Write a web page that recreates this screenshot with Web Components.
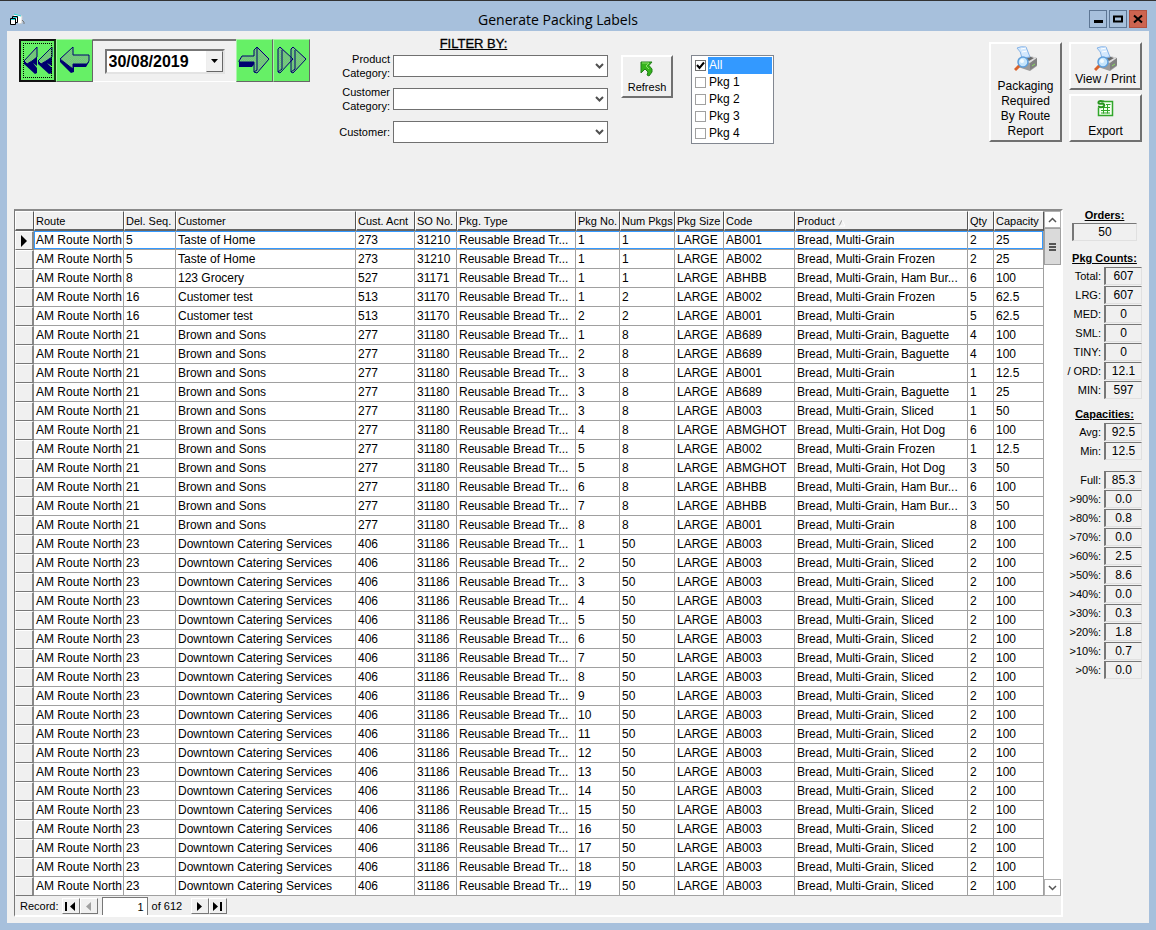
<!DOCTYPE html>
<html lang="en">
<head>
<meta charset="utf-8">
<title>Generate Packing Labels</title>
<style>
  html, body {
    margin: 0;
    height: 100%;
  }
  body {
    font-family: "Liberation Sans", Arial, sans-serif;
    font-size: 12px;
    color: #000;
    background: #a7c0dc;
  }
</style>
</head>
<body>
<app-window caption="Generate Packing Labels">
  <date-nav slot="tools" value="30/08/2019"></date-nav>
  <filter-panel slot="tools"></filter-panel>
  <tool-button slot="tools" icon="refresh" class="refresh">Refresh</tool-button>
  <pkg-list slot="tools"></pkg-list>
  <report-buttons slot="tools"></report-buttons>
  <label-grid></label-grid>
  <label-stats></label-stats>
</app-window>

<script>
const ICONS = {
  refresh: `<svg width="14" height="16" viewBox="0 0 14 16">
    <path d="M1 1L12 1L9 4.500L12 8V11L9 15L7 14L8 11L5 8L1 12Z" fill="#35b31c" stroke="#23801a"/>
    <path d="M2 2H9L6 5L9 8" fill="none" stroke="#8ce268"/></svg>`,
  printer: `<svg width="24" height="26" viewBox="0 0 24 26">
    <path d="M4 13L12 9L23 12V20L16 25L4 21Z" fill="#9a9a9a"/>
    <path d="M4 13L11 8L23 12L16 17Z" fill="#dcdcdc"/>
    <path d="M16 17L23 12V19L16 24Z" fill="#808080"/>
    <path d="M10 12L14 10L20 12L15 15Z" fill="#6a6a6a"/>
    <path d="M3 2Q7 0 12 1L16 11L8 12Q7 5 3 2Z" fill="#d3e8fd" stroke="#86b4e8"/>
    <path d="M7 3L12 2M8 6L13 5" stroke="#fff"/>
    <path d="M18 20L21 18" stroke="#8be05d"/>
    <path d="M6 19L1 24" stroke="#d9622b" stroke-width="3"/>
    <circle cx="9" cy="16" r="5" fill="#c5e5fc" stroke="#5e9fdc" stroke-width="1.5"/>
    <circle cx="8" cy="15" r="2" fill="#f5fcff"/></svg>`,
  export: `<svg width="17" height="17" viewBox="0 0 17 17">
    <path d="M7 1.500H15.500V15.500H1.500V8" fill="#f4fff0" stroke="#31a62a" stroke-width="1.5"/>
    <path d="M4 7.500H13M4 10.500H13M4 13H13M6.500 7V13.500M10.500 5V13.500M9 4.500H13.500" stroke="#31a62a"/>
    <path d="M7 1.500Q1 0 1.500 3Q2 4 5 3.500Q8 4 7 6Q5 8 1 6.500" fill="none" stroke="#27961f" stroke-width="2"/></svg>`
};

const CHEVRON = `<svg class="chevron" width="9" height="6" viewBox="0 0 9 6">
  <path d="M1 1L4.500 4.500L8 1" fill="none" stroke="#505050" stroke-width="2"/></svg>`;

class AppWindow extends HTMLElement {
  constructor() {
    super();
    this.attachShadow({ mode: 'open' });
  }
  connectedCallback() {
    this.shadowRoot.innerHTML = `
      <style>
        :host {
          display: flex;
          flex-direction: column;
          box-sizing: border-box;
          min-height: 100vh;
          padding: 0 7px 7px;
          border-top: 1px solid #333;
          background: #a7c0dc;
        }
        header {
          display: grid;
          grid-template-columns: 24px 1fr 64px;
          align-items: center;
          height: 30px;
        }
        header > svg {
          margin-left: 2px;
          margin-top: 6px;
        }
        h1 {
          margin: 8px 0 0;
          font: 14px/20px "Open Sans", sans-serif;
          text-align: center;
        }
        .controls {
          display: flex;
          justify-content: flex-end;
          gap: 2px;
          margin: 6px 2px 0 0;
        }
        .controls button {
          display: grid;
          place-items: center;
          width: 18px;
          height: 18px;
          padding: 0;
          border: 1px solid #5d7694;
          background: #a7c0dc;
        }
        .controls .close {
          border-color: #b3503f;
          background: #cd6450;
        }
        main {
          flex: 1;
          display: flex;
          flex-direction: column;
          padding: 5px 7px 6px 7px;
          background: #f0f0f0;
        }
        .tools {
          display: flex;
          align-items: flex-start;
          min-height: 173px;
          padding-left: 5px;
        }
        .content {
          flex: 1;
          display: flex;
          align-items: flex-start;
          gap: 4px;
        }
        ::slotted(date-nav) { margin-top: 3px; }
        ::slotted(filter-panel) { margin-left: 29px; }
        ::slotted(.refresh) { margin: 19px 18px 0 13px; width: 52px; height: 43px; font-size: 11px; }
        ::slotted(pkg-list) { margin-top: 19px; }
        ::slotted(report-buttons) { margin: 6px 0 0 auto; }
        ::slotted(label-grid) { flex: 1; min-width: 0; }
      </style>
      <header>
        <svg width="16" height="13" viewBox="0 0 16 13">
          <path d="M4 3L6 1L13 3V10L10 11" fill="#fff" stroke="#ccc"/>
          <path d="M5 1L12 3" stroke="#24dce0"/>
          <path d="M13 7L15 9V11" stroke="#777" fill="none"/>
          <path d="M3.500 3.500H8.500V9.500H3.500Z" fill="#fff" stroke="#000"/>
          <path d="M1.500 5.500H6.500V11.500H1.500Z" fill="#fff" stroke="#000"/>
          <path d="M2 6.500H6M4 4.500H8" stroke="#24dce0"/>
        </svg>
        <h1>${this.getAttribute('caption')}</h1>
        <div class="controls">
          <button aria-label="Minimize"><svg width="10" height="10"><path d="M1 6H10V9H1Z"/></svg></button>
          <button aria-label="Maximize"><svg width="10" height="10"><path d="M1 2.500H9V7.500H1Z" fill="none" stroke="#000" stroke-width="2"/></svg></button>
          <button class="close" aria-label="Close"><svg width="10" height="10"><path d="M1 1.500L9 8.500M9 1.500L1 8.500" stroke="#000" stroke-width="2"/></svg></button>
        </div>
      </header>
      <main>
        <div class="tools"><slot name="tools"></slot></div>
        <div class="content"><slot></slot></div>
      </main>
    `;
  }
}

class DateNav extends HTMLElement {
  constructor() {
    super();
    this.attachShadow({ mode: 'open' });
  }
  arrow(light, dark) {
    return `<svg width="34" height="36" viewBox="0 0 34 36">
      <defs><pattern id="hatch" width="2" height="2" patternUnits="userSpaceOnUse">
        <rect width="2" height="2" fill="#66f066"/><rect width="1" height="1" fill="#7f9f8f"/><rect x="1" y="1" width="1" height="1" fill="#7f9f8f"/>
      </pattern></defs>
      <path d="${dark}" fill="#000070"/>
      <path d="${light}" fill="url(#hatch)" stroke="#000070"/></svg>`;
  }
  connectedCallback() {
    this.shadowRoot.innerHTML = `
      <style>
        :host {
          display: flex;
          height: 43px;
        }
        .nav {
          display: grid;
          place-items: center;
          box-sizing: border-box;
          width: 37px;
          height: 43px;
          padding: 0;
          border: 1px solid;
          border-color: #a8f5a8 #666 #666 #a8f5a8;
          background: #66f066;
        }
        .first {
          border: 2px solid #111;
          border-right-color: #173b17;
          outline: 1px dotted #000;
          outline-offset: -5px;
        }
        .picker {
          display: grid;
          place-items: center;
          box-sizing: border-box;
          width: 143px;
          border-top: 2px solid #777;
          border-bottom: 1px solid #fff;
        }
        .combo {
          display: flex;
          box-sizing: border-box;
          width: 120px;
          height: 25px;
          border: 2px solid;
          border-color: #777 #e3e3e3 #e3e3e3 #777;
          background: #fff;
        }
        input {
          flex: 1;
          min-width: 0;
          padding: 2px 0 0 2px;
          border: 0;
          background: none;
          font: bold 16px "Liberation Sans", sans-serif;
        }
        .drop {
          display: grid;
          place-items: center;
          width: 17px;
          padding: 0;
          border: 1px solid;
          border-color: #eee #666 #666 #eee;
          background: #f0f0f0;
        }
      </style>
      <button class="nav first" aria-label="First date">${this.arrow('M3 18L16 4V14L11 18L6 21ZM17 18L31 4V14L25 18L20 21Z', 'M3 18L6 21L16 14V23L12 20L16 25V30L14 31L3 21ZM17 18L20 21L31 14V23L26 20L31 25V30L28 31L17 21Z')}</button>
      <button class="nav" aria-label="Previous date">${this.arrow('M2 16L15 4V12H31V18L29 21H15V26Z', 'M2 16L2 19L13 30L16 29V24H28L31 19H15V25Z')}</button>
      <div class="picker">
        <div class="combo">
          <input type="text" aria-label="Date" value="${this.getAttribute('value')}">
          <button class="drop" aria-label="Open calendar"><svg width="7" height="4"><path d="M0 0H7L3.500 4Z"/></svg></button>
        </div>
      </div>
      <button class="nav" aria-label="Next date">${this.arrow('M1 18L4 13H16V7L19 4L31 16L19 30L16 29V19H1Z M19 4V27L16 29', 'M1 18H17V20L14 24H1Z')}</button>
      <button class="nav" aria-label="Last date">${this.arrow('M3 6L5 4L18 16L5 30L3 29Z M16 6L18 4L31 16L18 30L16 29Z M7 7V26L3 29M20 7V26L16 29', 'M3 28L7 24V27L5 30Z')}</button>
    `;
  }
}

class FilterPanel extends HTMLElement {
  constructor() {
    super();
    this.attachShadow({ mode: 'open' });
  }
  connectedCallback() {
    const fields = ['Product<br>Category:', 'Customer<br>Category:', 'Customer:'];
    this.shadowRoot.innerHTML = `
      <style>
        :host {
          display: flex;
          flex-direction: column;
          gap: 5px;
          width: 269px;
        }
        h2 {
          margin: 0 0 -5px;
          font-size: 13px;
          line-height: 16px;
          font-weight: normal;
          text-align: center;
          text-decoration: underline;
          -webkit-text-stroke: 0.3px #000;
        }
        .field {
          display: grid;
          grid-template-columns: 1fr 215px;
          align-items: center;
          gap: 3px;
          height: 28px;
        }
        label {
          font-size: 11px;
          line-height: 14px;
          text-align: right;
        }
        .select {
          display: grid;
          align-items: center;
        }
        select, .chevron {
          grid-area: 1 / 1;
        }
        select {
          appearance: none;
          box-sizing: border-box;
          width: 100%;
          height: 22px;
          border: 1px solid #707070;
          border-radius: 0;
          background: #fff;
        }
        .chevron {
          justify-self: end;
          margin-right: 4px;
          pointer-events: none;
        }
      </style>
      <h2>FILTER BY:</h2>
      ${fields.map((text, i) => `
        <div class="field">
          <label for="f${i}">${text}</label>
          <div class="select"><select id="f${i}"></select>${CHEVRON}</div>
        </div>`).join('')}
    `;
  }
}

class ToolButton extends HTMLElement {
  constructor() {
    super();
    this.attachShadow({ mode: 'open' });
  }
  connectedCallback() {
    this.shadowRoot.innerHTML = `
      <style>
        :host {
          display: block;
        }
        button {
          display: flex;
          flex-direction: column;
          align-items: center;
          justify-content: space-between;
          box-sizing: border-box;
          width: 100%;
          height: 100%;
          padding: 4px 2px 1px;
          border: 2px solid;
          border-color: #fff #707070 #707070 #fff;
          background: #f0f0f0;
          font: inherit;
          line-height: 15px;
          text-align: center;
        }
        :host([icon="printer"]) button {
          padding: 2px 2px 1px;
        }
      </style>
      <button>${ICONS[this.getAttribute('icon')]}<span><slot></slot></span></button>
    `;
  }
}

class PkgList extends HTMLElement {
  constructor() {
    super();
    this.attachShadow({ mode: 'open' });
  }
  connectedCallback() {
    const items = ['All', 'Pkg 1', 'Pkg 2', 'Pkg 3', 'Pkg 4'];
    this.shadowRoot.innerHTML = `
      <style>
        :host {
          display: block;
          box-sizing: border-box;
          width: 83px;
          padding: 1px;
          border: 1px solid #828790;
          background: #fff;
        }
        .item {
          display: flex;
          align-items: center;
          height: 17px;
          padding-left: 2px;
          gap: 2px;
        }
        .check {
          display: grid;
          place-items: center;
        }
        input, svg {
          grid-area: 1 / 1;
        }
        input {
          appearance: none;
          box-sizing: border-box;
          width: 11px;
          height: 11px;
          margin: 0;
          border: 1px solid #a0a0a0;
          background: #fff;
        }
        input:checked {
          border-color: #707070;
        }
        svg {
          pointer-events: none;
          visibility: hidden;
        }
        input:checked + svg {
          visibility: visible;
        }
        label {
          flex: 1;
          padding-left: 1px;
          line-height: 17px;
        }
        .selected label {
          background: #3399ff;
          color: #fff;
        }
      </style>
      ${items.map((text, i) => `
        <div class="item ${i ? '' : 'selected'}">
          <span class="check">
            <input type="checkbox" id="p${i}" ${i ? '' : 'checked'}>
            <svg width="9" height="9"><path d="M1 4L3.500 7L8 1.500" fill="none" stroke="#000" stroke-width="2"/></svg>
          </span>
          <label for="p${i}">${text}</label>
        </div>`).join('')}
    `;
  }
}

class ReportButtons extends HTMLElement {
  constructor() {
    super();
    this.attachShadow({ mode: 'open' });
  }
  connectedCallback() {
    this.shadowRoot.innerHTML = `
      <style>
        :host {
          display: grid;
          grid-template-columns: 73px 73px;
          grid-template-rows: 48px 48px;
          gap: 4px 7px;
        }
        .tall {
          grid-row: span 2;
        }
      </style>
      <tool-button class="tall" icon="printer">Packaging Required By&nbsp;Route Report</tool-button>
      <tool-button icon="printer">View / Print</tool-button>
      <tool-button icon="export">Export</tool-button>
    `;
  }
}

const COLUMNS = [
  ['Route', 90], ['Del. Seq.', 52], ['Customer', 180], ['Cust. Acnt', 59], ['SO No.', 42],
  ['Pkg. Type', 119], ['Pkg No.', 44], ['Num Pkgs', 55], ['Pkg Size', 49], ['Code', 71],
  ['Product', 0], ['Qty', 26], ['Capacity', 50]
];

const GRAIN = 'Bread, Multi-Grain';

// seq, customer, account, order, pkg no, num pkgs, code, product, qty, capacity
const ORDERS = [
  [5, 'Taste of Home', 273, 31210, 1, 1, 'AB001', GRAIN, 2, 25],
  [5, 'Taste of Home', 273, 31210, 1, 1, 'AB002', GRAIN + ' Frozen', 2, 25],
  [8, '123 Grocery', 527, 31171, 1, 1, 'ABHBB', GRAIN + ', Ham Bur...', 6, 100],
  [16, 'Customer test', 513, 31170, 1, 2, 'AB002', GRAIN + ' Frozen', 5, 62.5],
  [16, 'Customer test', 513, 31170, 2, 2, 'AB001', GRAIN, 5, 62.5],
  ...[
    [1, 'AB689', ', Baguette', 4, 100],
    [2, 'AB689', ', Baguette', 4, 100],
    [3, 'AB001', '', 1, 12.5],
    [3, 'AB689', ', Baguette', 1, 25],
    [3, 'AB003', ', Sliced', 1, 50],
    [4, 'ABMGHOT', ', Hot Dog', 6, 100],
    [5, 'AB002', ' Frozen', 1, 12.5],
    [5, 'ABMGHOT', ', Hot Dog', 3, 50],
    [6, 'ABHBB', ', Ham Bur...', 6, 100],
    [7, 'ABHBB', ', Ham Bur...', 3, 50],
    [8, 'AB001', '', 8, 100]
  ].map(([no, code, kind, qty, cap]) => [21, 'Brown and Sons', 277, 31180, no, 8, code, GRAIN + kind, qty, cap]),
  ...Array.from({ length: 19 }, (_, i) =>
    [23, 'Downtown Catering Services', 406, 31186, i + 1, 50, 'AB003', GRAIN + ', Sliced', 2, 100])
];

class LabelGrid extends HTMLElement {
  constructor() {
    super();
    this.attachShadow({ mode: 'open' });
  }
  row([seq, customer, account, order, no, total, code, product, qty, cap], i) {
    const cells = ['AM Route North', seq, customer, account, order, 'Reusable Bread Tr...', no, total, 'LARGE', code, product, qty, cap];
    return `<tr class="${i ? '' : 'current'}">
      <th scope="row">${i ? '' : '<svg width="6" height="12"><path d="M0 0L6 6L0 12Z"/></svg>'}</th>
      ${cells.map(c => `<td>${c}</td>`).join('')}</tr>`;
  }
  connectedCallback() {
    const sort = '<svg width="8" height="8"><path d="M1 7L4 1" stroke="#999"/><path d="M4 1L7 7H1" fill="none" stroke="#fff"/></svg>';
    this.shadowRoot.innerHTML = `
      <style>
        :host {
          display: block;
          border: 2px solid;
          border-color: #8a8a8a #fff #fff #777;
          border-left-width: 1px;
        }
        .view {
          display: flex;
        }
        table {
          flex: 1;
          min-width: 0;
          width: 0;
          table-layout: fixed;
          border-collapse: separate;
          border-spacing: 0;
          background: #fff;
        }
        th, td {
          box-sizing: border-box;
          height: 19px;
          padding: 0 0 0 2px;
          border-right: 1px solid #a0a0a0;
          border-bottom: 1px solid #a0a0a0;
          line-height: 18px;
          text-align: left;
          white-space: nowrap;
          overflow: hidden;
          font-weight: normal;
        }
        th {
          background: #f0f0f0;
          border-color: #777;
          border-top: 1px solid #fff;
          border-left: 1px solid #fff;
          padding-left: 1px;
        }
        thead th {
          height: 20px;
          padding-top: 1px;
          font-size: 11px;
          line-height: 16px;
          border-right-color: #555;
          border-bottom: 2px solid #666;
        }
        tbody th {
          padding: 0 0 0 5px;
          line-height: 0;
          border-right: 2px solid #888;
        }
        .current td {
          box-shadow: inset 0 1px #3399ff, inset 0 -1px #3399ff;
        }
        .current td:nth-child(2) {
          box-shadow: inset 1px 1px #3399ff, inset 0 -1px #3399ff;
        }
        .current td:last-child {
          box-shadow: inset -1px 1px #3399ff, inset 0 -1px #3399ff;
        }
        thead svg {
          margin-left: 3px;
          vertical-align: -2px;
        }
        .scroll {
          display: flex;
          flex-direction: column;
          width: 17px;
          background: #fff;
        }
        .scroll button {
          display: grid;
          place-items: center;
          box-sizing: border-box;
          width: 17px;
          height: 17px;
          padding: 0;
          border: 1px solid #b0b0b0;
          background: #fff;
        }
        .scroll button:last-child {
          margin-top: auto;
        }
        .thumb {
          display: grid;
          place-items: center;
          height: 35px;
          border: 1px solid #a0a0a0;
          background: #dadada;
        }
      </style>
      <div class="view">
        <table>
          <colgroup><col style="width: 19px">${COLUMNS.map(([, w]) => `<col${w ? ` style="width: ${w}px"` : ''}>`).join('')}</colgroup>
          <thead><tr><th></th>${COLUMNS.map(([name]) => `<th scope="col">${name}${name === 'Product' ? sort : ''}</th>`).join('')}</tr></thead>
          <tbody>${ORDERS.map(this.row).join('')}</tbody>
        </table>
        <div class="scroll">
          <button aria-label="Scroll up"><svg width="9" height="6"><path d="M1 5L4.500 1.500L8 5" fill="none" stroke="#555" stroke-width="1.500"/></svg></button>
          <div class="thumb"><svg width="7" height="8"><path d="M0 1H7M0 4H7M0 7H7" stroke="#555" stroke-width="2"/></svg></div>
          <button aria-label="Scroll down"><svg width="9" height="6"><path d="M1 1L4.500 4.500L8 1" fill="none" stroke="#555" stroke-width="1.500"/></svg></button>
        </div>
      </div>
      <record-nav></record-nav>
    `;
  }
}

class RecordNav extends HTMLElement {
  constructor() {
    super();
    this.attachShadow({ mode: 'open' });
  }
  connectedCallback() {
    this.shadowRoot.innerHTML = `
      <style>
        :host {
          display: flex;
          align-items: center;
          height: 18px;
          padding: 1px 0 0 5px;
          font-size: 11px;
        }
        .pair {
          display: flex;
        }
        button {
          display: grid;
          place-items: center;
          box-sizing: border-box;
          width: 18px;
          height: 16px;
          padding: 0;
          border: 1px solid;
          border-color: #fff #777 #777 #fff;
          background: #f0f0f0;
        }
        .back {
          margin: 0 4px 0 3px;
        }
        input {
          box-sizing: border-box;
          width: 46px;
          height: 18px;
          padding: 0 3px;
          border: 1px solid #777;
          border-bottom: 0;
          font: inherit;
          text-align: right;
        }
        .total {
          width: 39px;
          padding-left: 4px;
        }
      </style>
      <label for="rec">Record:</label>
      <div class="pair back">
        <button aria-label="First record"><svg width="11" height="9"><path d="M0 0H2V9H0ZM10 0V9L5 4.500Z"/></svg></button>
        <button aria-label="Previous record"><svg width="5" height="9"><path d="M5 0V9L0 4.500Z" fill="#a0a0a0"/></svg></button>
      </div>
      <input id="rec" type="text" value="1">
      <span class="total">of 612</span>
      <div class="pair">
        <button aria-label="Next record"><svg width="5" height="9"><path d="M0 0V9L5 4.500Z"/></svg></button>
        <button aria-label="Last record"><svg width="10" height="9"><path d="M0 0V9L5 4.500ZM7 0H9V9H7Z"/></svg></button>
      </div>
    `;
  }
}

class LabelStats extends HTMLElement {
  constructor() {
    super();
    this.attachShadow({ mode: 'open' });
  }
  rows(list) {
    return list.map(([name, value]) => `<dt>${name}:</dt><dd>${value}</dd>`).join('');
  }
  connectedCallback() {
    this.shadowRoot.innerHTML = `
      <style>
        :host {
          display: block;
          width: 75px;
        }
        h2 {
          margin: 0;
          font-size: 11px;
          line-height: 12px;
          text-align: center;
          text-decoration: underline;
          white-space: nowrap;
        }
        dl {
          display: grid;
          grid-template-columns: 1fr 38px;
          gap: 0 3px;
          margin: 3px 0 10px;
        }
        dt {
          font-size: 11px;
          line-height: 18px;
          text-align: right;
          white-space: nowrap;
        }
        dd, .orders {
          box-sizing: border-box;
          height: 18px;
          margin: 0 0 1px;
          border: 1px solid;
          border-color: #777 #e0e0e0 #e0e0e0 #777;
          border-left-width: 2px;
          line-height: 17px;
          text-align: center;
        }
        .orders {
          margin: 2px 5px 11px;
        }
        dl.tight {
          margin-bottom: 8px;
        }
      </style>
      <h2>Orders:</h2>
      <div class="orders">50</div>
      <h2>Pkg Counts:</h2>
      <dl class="tight">${this.rows([['Total', 607], ['LRG', 607], ['MED', 0], ['SML', 0], ['TINY', 0], ['/ ORD', 12.1], ['MIN', 597]])}</dl>
      <h2>Capacities:</h2>
      <dl>${this.rows([['Avg', 92.5], ['Min', 12.5]])}</dl>
      <dl>${this.rows([['Full', 85.3], ['&gt;90%', '0.0'], ['&gt;80%', 0.8], ['&gt;70%', '0.0'], ['&gt;60%', 2.5],
        ['&gt;50%', 8.6], ['&gt;40%', '0.0'], ['&gt;30%', 0.3], ['&gt;20%', 1.8], ['&gt;10%', 0.7], ['&gt;0%', '0.0']])}</dl>
    `;
  }
}

customElements.define('tool-button', ToolButton);
customElements.define('record-nav', RecordNav);
customElements.define('date-nav', DateNav);
customElements.define('filter-panel', FilterPanel);
customElements.define('pkg-list', PkgList);
customElements.define('report-buttons', ReportButtons);
customElements.define('label-grid', LabelGrid);
customElements.define('label-stats', LabelStats);
customElements.define('app-window', AppWindow);
</script>
</body>
</html>
